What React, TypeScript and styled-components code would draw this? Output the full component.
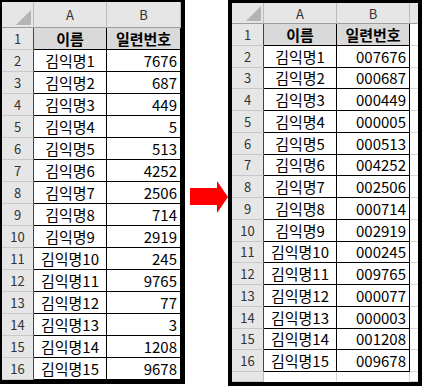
import { Fragment } from "react";
import styled, { createGlobalStyle } from "styled-components";

const GlobalStyle = createGlobalStyle`
  html, body {
    margin: 0;
    padding: 0;
    background: #fff;
  }
  body {
    font-family: "Noto Sans CJK KR", "Liberation Sans", sans-serif;
    color: #000;
  }
`;

const Page = styled.div`
  display: flex;
  align-items: flex-start;
  width: 422px;
  height: 386px;
  overflow: hidden;
`;

const Sheet = styled.div<{ $cols: string; $rows: string; $border: string; $height: number }>`
  display: grid;
  grid-template-columns: ${(p) => p.$cols};
  grid-template-rows: ${(p) => p.$rows};
  height: ${(p) => p.$height}px;
  border-style: solid;
  border-color: #000;
  border-width: ${(p) => p.$border};
  box-sizing: border-box;
  background: #fff;
  overflow: hidden;
  flex-shrink: 0;
`;

const HeadBase = styled.div`
  box-sizing: border-box;
  background: #e6e6e6;
  display: flex;
  align-items: center;
  justify-content: center;
  font-size: 13px;
  line-height: 1;
  color: #333;
`;

const Corner = styled(HeadBase)`
  border-right: 1px solid #bcbcbc;
  border-bottom: 1px solid #9c9c9c;
  position: relative;

  svg {
    position: absolute;
    right: 2px;
    bottom: 2px;
  }
`;

const ColHead = styled(HeadBase)<{ $edge?: boolean }>`
  border-right: 1px solid ${(p) => (p.$edge ? "transparent" : "#bcbcbc")};
  border-bottom: 1px solid #9c9c9c;
`;

const RowHead = styled(HeadBase)<{ $blank?: boolean }>`
  border-right: 1px solid ${(p) => (p.$blank ? "#bcbcbc" : "#444")};
  border-bottom: 1px solid #c8c8c8;
`;

type Kind = "title" | "name" | "num" | "edge" | "blank";

const Cell = styled.div<{ $kind: Kind }>`
  box-sizing: border-box;
  display: flex;
  align-items: center;
  font-size: 15px;
  line-height: 1;
  white-space: nowrap;
  overflow: hidden;
  justify-content: ${(p) => (p.$kind === "num" ? "flex-end" : "center")};
  padding-right: ${(p) => (p.$kind === "num" ? "3px" : "0")};
  font-weight: ${(p) => (p.$kind === "title" ? 700 : 400)};
  background: ${(p) => (p.$kind === "title" ? "#d9d9d9" : "#fff")};
  border-right: 1px solid
    ${(p) => (p.$kind === "edge" ? "transparent" : p.$kind === "blank" ? "#d4d4d4" : "#000")};
  border-bottom: 1px solid
    ${(p) => (p.$kind === "edge" ? "#d4d4d4" : p.$kind === "blank" ? "transparent" : "#000")};
`;

const ArrowWrap = styled.div`
  margin: 180px 0 0 5px;
  width: 38px;
  height: 34px;
  flex-shrink: 0;
`;

const values = [7676, 687, 449, 5, 513, 4252, 2506, 714, 2919, 245, 9765, 77, 3, 1208, 9678];
const rows = values.map((v, i) => ({ name: `김익명${i + 1}`, value: v }));

function Triangle({ size }: { size: number }) {
  return (
    <svg width={size} height={size} viewBox="0 0 10 10">
      <polygon points="0,10 10,10 10,0" fill="#b4b4b4" />
    </svg>
  );
}

function Arrow() {
  return (
    <svg width="38" height="34" viewBox="0 0 38 34">
      <rect x="0" y="8" width="28" height="17" fill="#ff0000" />
      <polygon points="27,1 38,17 27,33" fill="#ff0000" />
    </svg>
  );
}

function App() {
  return (
    <>
      <GlobalStyle />
      <Page>
        <Sheet
          $cols="32px 73px 74px"
          $rows="26px repeat(16, 22px)"
          $border="2px 4px 4px 2px"
          $height={384}
        >
          <Corner>
            <Triangle size={15} />
          </Corner>
          <ColHead>A</ColHead>
          <ColHead>B</ColHead>
          <RowHead>1</RowHead>
          <Cell $kind="title">이름</Cell>
          <Cell $kind="title">일련번호</Cell>
          {rows.map((r, i) => (
            <Fragment key={i}>
              <RowHead>{i + 2}</RowHead>
              <Cell $kind="name">{r.name}</Cell>
              <Cell $kind="num">{r.value}</Cell>
            </Fragment>
          ))}
        </Sheet>

        <ArrowWrap>
          <Arrow />
        </ArrowWrap>

        <Sheet
          $cols="32px 73px 73px 8px"
          $rows="21px repeat(16, 21.75px) 1fr"
          $border="3px 4px 4px 4px"
          $height={386}
        >
          <Corner>
            <Triangle size={15} />
          </Corner>
          <ColHead>A</ColHead>
          <ColHead>B</ColHead>
          <ColHead $edge />
          <RowHead>1</RowHead>
          <Cell $kind="title">이름</Cell>
          <Cell $kind="title">일련번호</Cell>
          <Cell $kind="edge" />
          {rows.map((r, i) => (
            <Fragment key={i}>
              <RowHead>{i + 2}</RowHead>
              <Cell $kind="name">{r.name}</Cell>
              <Cell $kind="num">{String(r.value).padStart(6, "0")}</Cell>
              <Cell $kind="edge" />
            </Fragment>
          ))}
          <RowHead $blank />
          <Cell $kind="blank" />
          <Cell $kind="blank" />
          <Cell $kind="edge" />
        </Sheet>
      </Page>
    </>
  );
}

export default App;
